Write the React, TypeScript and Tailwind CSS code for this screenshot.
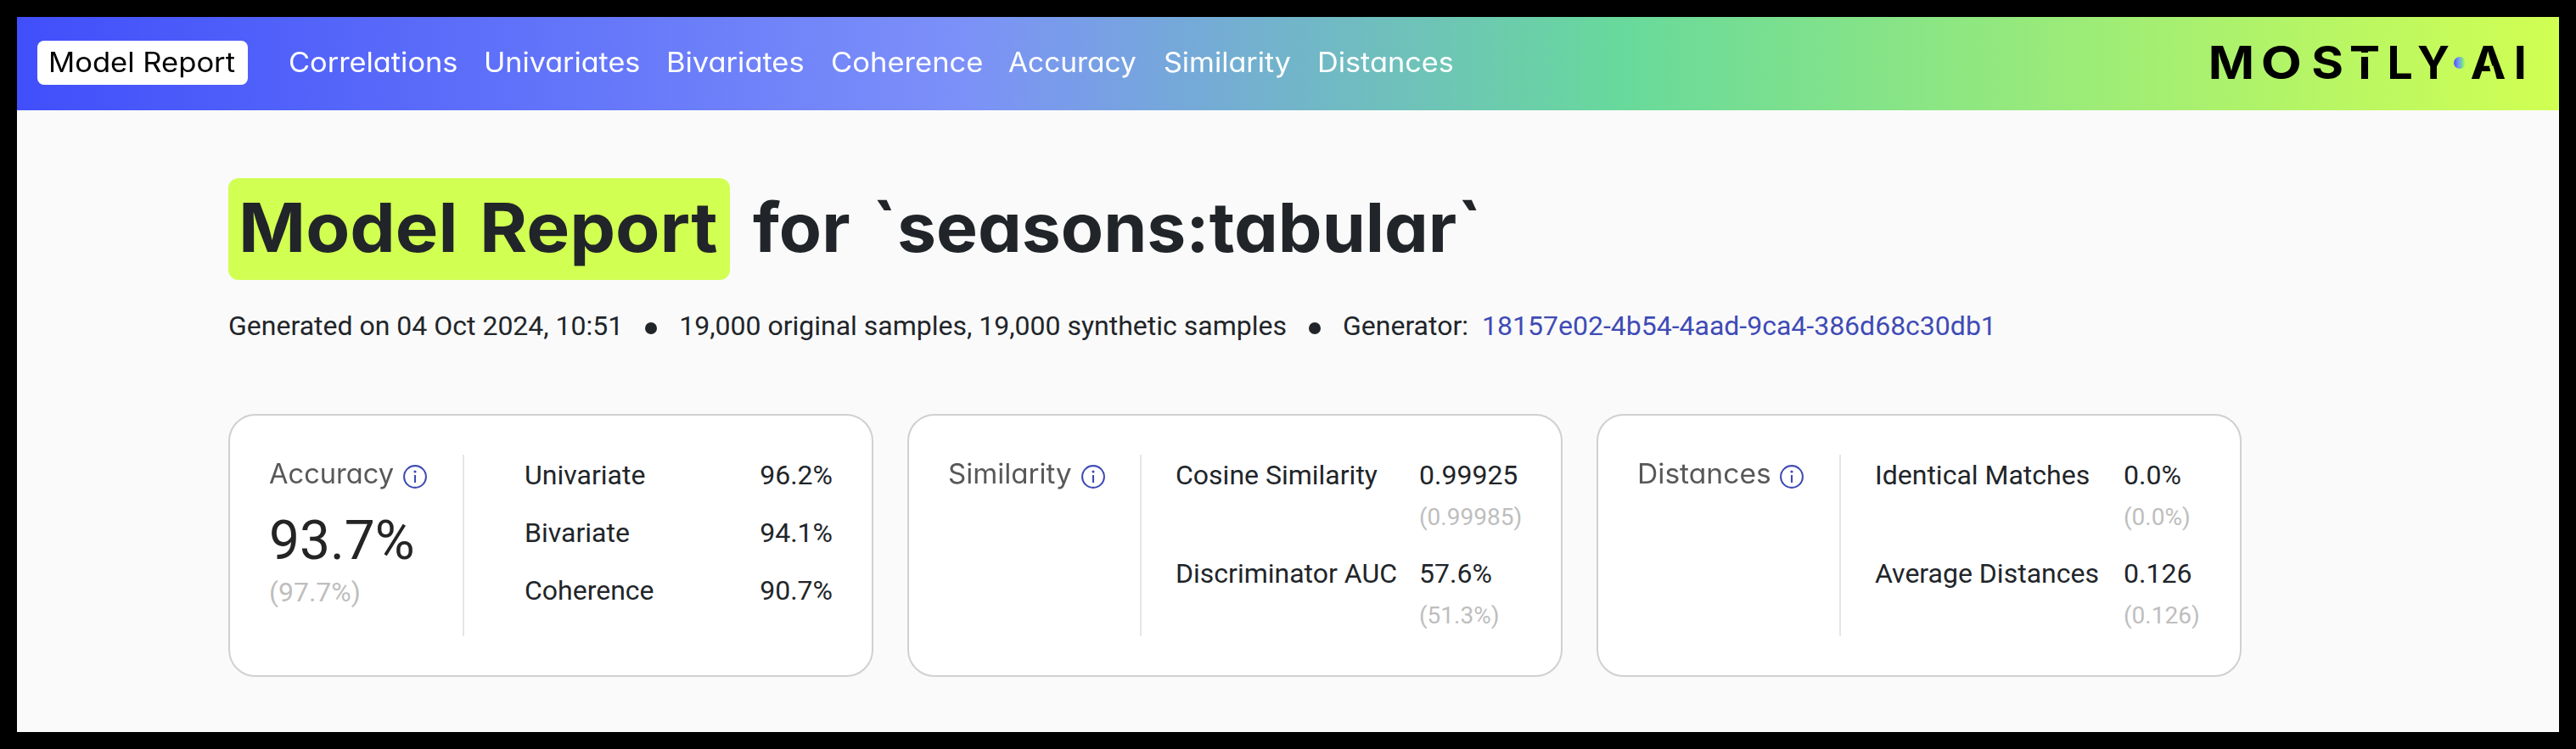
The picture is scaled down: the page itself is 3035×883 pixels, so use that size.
import type { ReactNode } from "react";

const grotesk = "font-[Inter,sans-serif] [font-feature-settings:'cv11']";

function InfoIcon() {
  return (
    <svg className="size-[28px] shrink-0" viewBox="0 0 28 28" fill="none" stroke="#3f4bb5">
      <circle cx="14" cy="14" r="12.9" strokeWidth="2.1" />
      <path d="M14 12v9" strokeWidth="2.1" />
      <circle cx="14" cy="8" r="1.6" fill="#3f4bb5" stroke="none" />
    </svg>
  );
}

const logoLetters = [
  { char: "M", x: 1.8, width: 54.3 },
  { char: "O", x: 63.8, width: 48.2 },
  { char: "S", x: 123.2, width: 37.8 },
  { char: "T", x: 168, width: 36, mask: "url(#logo-t)" },
  { char: "L", x: 212.6, width: 30.3 },
  { char: "Y", x: 248, width: 38 },
  { char: "A", x: 310.6, width: 42, mask: "url(#logo-a)" },
  { char: "I", x: 361.7, width: 15 },
];

function Logo() {
  return (
    <svg className="h-[90px] w-[380px]" viewBox="0 -20 380 90" role="img">
      <defs>
        <linearGradient id="logo-dot" x1="0" x2="1" y1="0" y2="0">
          <stop offset="0" stopColor="#4450f7" />
          <stop offset="0.38" stopColor="#7c8ff9" />
          <stop offset="0.68" stopColor="#69d99b" />
          <stop offset="1" stopColor="#d1ff52" />
        </linearGradient>
        <mask id="logo-t" maskUnits="userSpaceOnUse" x="0" y="0" width="380" height="50">
          <rect width="380" height="50" fill="#fff" />
          <rect x="160" y="12" width="50" height="5" fill="#000" />
        </mask>
        <mask id="logo-a" maskUnits="userSpaceOnUse" x="0" y="0" width="380" height="50">
          <rect width="380" height="50" fill="#fff" />
          <path d="M332.6 27.5h4.8l3.3 11.5h-5z" fill="#000" />
        </mask>
      </defs>
      <g fill="#000" className="font-[Inter,sans-serif] text-[53.5px] font-bold">
        {logoLetters.map((l) => (
          <g key={l.char} mask={l.mask}>
            <text x={l.x} y="43.3" textLength={l.width} lengthAdjust="spacingAndGlyphs">
              {l.char}
            </text>
          </g>
        ))}
      </g>
      <circle cx="298" cy="24" r="7" fill="url(#logo-dot)" />
    </svg>
  );
}

const navItems = [
  { label: "Correlations", width: "w-[230px]", stretch: "scale-x-[1.073]" },
  { label: "Univariates", width: "w-[215px]", stretch: "scale-x-[1.065]" },
  { label: "Bivariates", width: "w-[194px]", stretch: "scale-x-[1.075]" },
  { label: "Coherence", width: "w-[209px]", stretch: "scale-x-[1.08]" },
  { label: "Accuracy", width: "w-[183px]", stretch: "scale-x-[1.045]" },
  { label: "Similarity", width: "w-[181px]", stretch: "scale-x-[1.065]" },
  { label: "Distances", width: "w-[160px]", stretch: "scale-x-[1.07]" },
];

function Card({ title, width, side, summary, children }: { title: ReactNode; width: string; side: string; summary?: ReactNode; children: ReactNode }) {
  return (
    <section className={`flex h-[310px] rounded-[32px] border-2 border-[#d0d0d0] bg-white pt-[46px] pr-[46px] pl-[46px] ${width}`}>
      <div className={`h-[214px] shrink-0 border-r-2 border-[#e6e6e6] ${side}`}>
        <div className={`flex h-[52px] items-center gap-[12px] text-[32px] text-[#585858] ${grotesk}`}>
          <span className="mb-[6px]">{title}</span>
          <InfoIcon />
        </div>
        {summary}
      </div>
      {children}
    </section>
  );
}

function Metrics({ rows, cls, labelWidth }: { rows: { label: string; value: string; reference: string }[]; cls: string; labelWidth: string }) {
  return (
    <dl className={`flex flex-col gap-4 text-[32px] leading-[48px] whitespace-nowrap text-[#212529] ${cls}`}>
      {rows.map((row) => (
        <div key={row.label} className="flex">
          <dt className={`shrink-0 ${labelWidth}`}>{row.label}</dt>
          <dd>
            <div>{row.value}</div>
            <div className="text-[28px] leading-[52px] text-[#bebebe]">{row.reference}</div>
          </dd>
        </div>
      ))}
    </dl>
  );
}

const accuracyRows = [
  { label: "Univariate", value: "96.2%" },
  { label: "Bivariate", value: "94.1%" },
  { label: "Coherence", value: "90.7%" },
];

export default function App() {
  return (
    <div className="h-[883px] w-[3035px] bg-black p-[20px]">
      <div className="h-[843px] bg-[#fafafa]">
        <header className="flex h-[110px] items-center bg-[linear-gradient(90deg,#404ffa_0%,#7c90f9_37%,#68d99c_63%,#d1ff52_100%)] pr-[35px] pb-[2px] pl-[24px]">
          <div className={`flex h-[52px] w-[248px] items-center rounded-[8px] bg-white pl-[13px] text-[32px] whitespace-nowrap text-black ${grotesk}`}>
            <span className="origin-left scale-x-[1.08]">Model Report</span>
          </div>
          <nav className={`ml-[48px] flex text-[32px] text-white ${grotesk}`}>
            {navItems.map((item) => (
              <a key={item.label} className={item.width}>
                <span className={`inline-block origin-left ${item.stretch}`}>{item.label}</span>
              </a>
            ))}
          </nav>
          <div className="mt-[2px] ml-auto">
            <Logo />
          </div>
        </header>

        <h1 className={`mt-[80px] ml-[249px] flex h-[120px] items-center text-[80px] leading-[100px] font-bold whitespace-nowrap text-[#212529] ${grotesk}`}>
          <span className="flex h-[120px] w-[591px] items-center rounded-[12px] bg-[#d1ff52] pb-1 pl-[12px]">
            <span className="w-[284px] origin-left scale-x-[1.062]">Model</span>
            <span className="origin-left scale-x-[1.07]">Report</span>
          </span>
          <span className="ml-[27px] w-[140px] origin-left scale-x-[1.025] pb-1">for</span>
          <span className="origin-left scale-x-[1.027] pb-1">`seasons:tabular`</span>
        </h1>

        <div className="mt-[30px] ml-[249px] flex h-[48px] items-center font-[Roboto,sans-serif] text-[32px] leading-[48px] whitespace-nowrap text-[#212529]">
          <span>Generated on 04 Oct 2024, 10:51</span>
          <span className="mx-[26px] mt-[5px] size-[14px] rounded-full bg-[#212529]" />
          <span>19,000 original samples, 19,000 synthetic samples</span>
          <span className="mx-[26px] mt-[5px] size-[14px] rounded-full bg-[#212529]" />
          <span>Generator:</span>
          <a className="ml-4 text-[#3f4bb5]">18157e02-4b54-4aad-9ca4-386d68c30db1</a>
        </div>

        <main className="mt-[80px] ml-[249px] flex gap-[40px] font-[Roboto,sans-serif]">
          <Card
            title={<span className="inline-block w-[146px] origin-left scale-x-[1.02]">Accuracy</span>}
            width="w-[760px]"
            side="w-[230px]"
            summary={
              <div className="pt-[18px]">
                <p className="text-[64px] leading-[64px] text-[#242424]">93.7%</p>
                <p className="mt-1 text-[32px] leading-[48px] text-[#bebebe]">(97.7%)</p>
              </div>
            }
          >
            <dl className="ml-[71px] flex grow flex-col gap-5 text-[32px] leading-[48px] text-[#212529]">
              {accuracyRows.map((row) => (
                <div key={row.label} className="flex justify-between">
                  <dt>{row.label}</dt>
                  <dd>{row.value}</dd>
                </div>
              ))}
            </dl>
          </Card>
          <Card title={<span className="inline-block w-[145px] origin-left scale-x-[1.035]">Similarity</span>} width="w-[772px]" side="w-[228px]">
            <Metrics
              cls="ml-[40px]"
              labelWidth="w-[287px]"
              rows={[
                { label: "Cosine Similarity", value: "0.99925", reference: "(0.99985)" },
                { label: "Discriminator AUC", value: "57.6%", reference: "(51.3%)" },
              ]}
            />
          </Card>
          <Card title={<span className="inline-block w-[156px] origin-left scale-x-[1.05]">Distances</span>} width="w-[760px]" side="w-[240px]">
            <Metrics
              cls="ml-[40px]"
              labelWidth="w-[293px]"
              rows={[
                { label: "Identical Matches", value: "0.0%", reference: "(0.0%)" },
                { label: "Average Distances", value: "0.126", reference: "(0.126)" },
              ]}
            />
          </Card>
        </main>
      </div>
    </div>
  );
}
